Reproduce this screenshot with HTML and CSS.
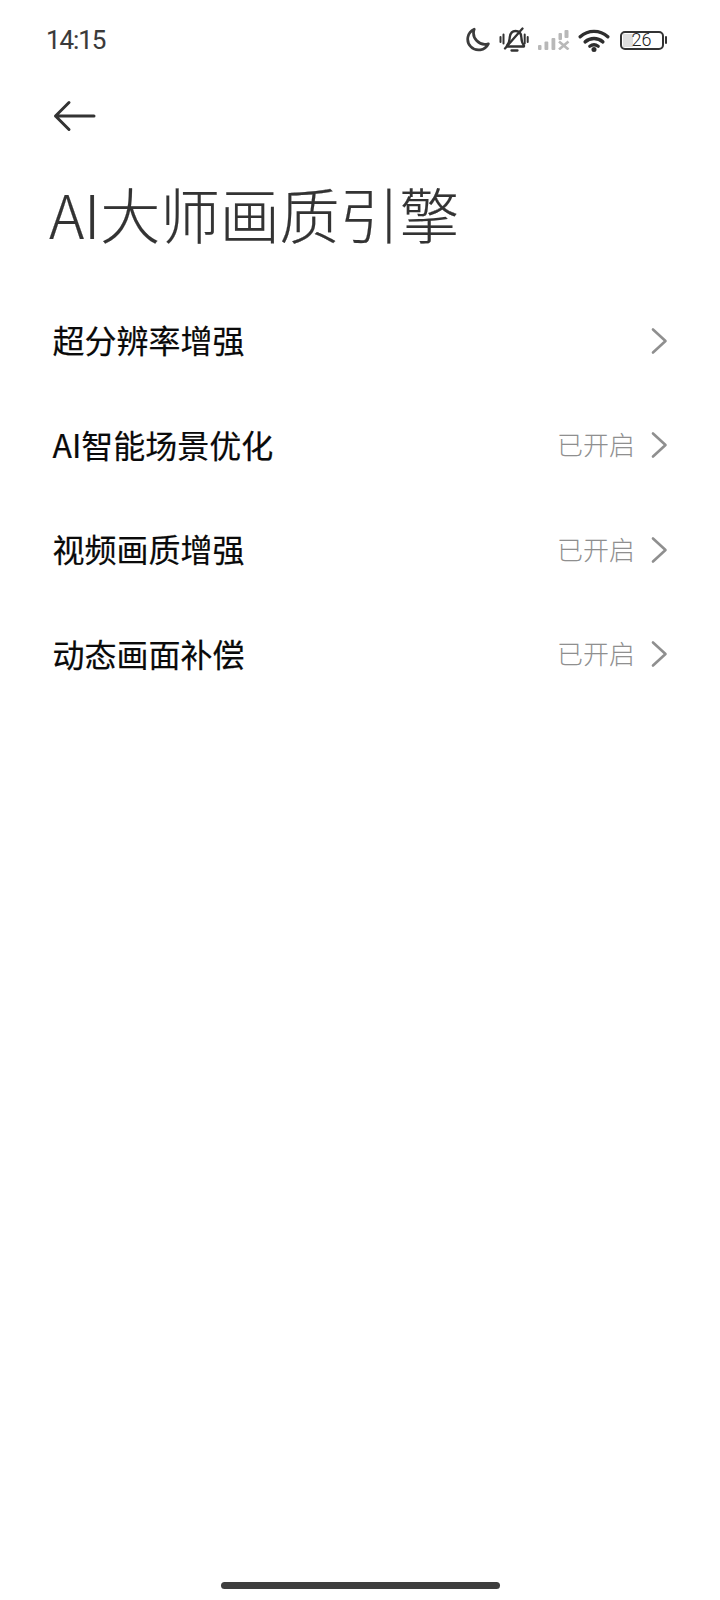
FILE: index.html
```html
<!DOCTYPE html>
<html lang="zh-CN">
<head>
<meta charset="utf-8">
<title>AI大师画质引擎</title>
<link rel="stylesheet" href="styles.css">
</head>
<body>
<div class="screen">
  <header class="status">
    <span class="time">14:15</span>
    <div class="status-icons">
      <svg class="ic-moon" width="25" height="26" viewBox="0 0 23 24" fill="none" stroke="#3c3c3c" stroke-width="2.500" stroke-linecap="round" stroke-linejoin="round"><path d="M8.500 2A10 10 0 1 0 21.500 15.500 10.500 10.500 0 0 1 8.500 2Z"/></svg>
      <svg class="ic-bell" width="30" height="26" viewBox="0 0 30 26" fill="none" stroke="#333" stroke-width="2.300" stroke-linecap="round" stroke-linejoin="round"><path d="M8 18.500c2.500-2 2.300-5 2.800-8.500C11.400 6 14 4 16.500 4c3.500 0 5.600 2.500 5.800 6 .1 3 .5 6 2.700 8.500v1H8.500"/><path d="M12.500 23.500h6"/><path d="M6 21.500 23.500 1.500"/><path d="M1.500 10v5M4.500 7.500v9M25.700 7.500v9M28.700 10v5" stroke-width="2"/></svg>
      <svg class="ic-signal" width="32" height="20" viewBox="0 0 32 20" fill="#b8b8b8"><rect x="0" y="15" width="3.500" height="5" rx="1"/><rect x="6.500" y="11.500" width="3.800" height="8.500" rx="1"/><rect x="13.500" y="8" width="3.800" height="12" rx="1"/><rect x="20.500" y="3" width="3.500" height="7" rx="1"/><rect x="26.500" y="0" width="4" height="8" rx="1"/><path d="M21 11.500l9.500 8M30.500 11.500l-9.500 8" stroke="#b8b8b8" stroke-width="2.600" fill="none"/></svg>
      <svg class="ic-wifi" width="32" height="23" viewBox="0 0 30 22" fill="none" stroke="#2e2e2e" stroke-width="3.200" stroke-linecap="round"><path d="M1.800 7.500C9.500 .5 20.500 .5 28.200 7.500"/><path d="M6.500 12.300c5-4.300 12-4.300 17 0"/><path d="M11 16.500c2.500-1.800 5.500-1.800 8 0"/><circle cx="15" cy="19.500" r="2.400" fill="#2e2e2e" stroke="none"/></svg>
      <div class="battery">
        <div class="batt-body"><span class="batt-fill"></span><span class="batt-num">26</span></div>
        <span class="batt-cap"></span>
      </div>
    </div>
  </header>

  <div class="nav">
    <svg width="44" height="32" viewBox="0 0 44 32" fill="none" stroke="#333" stroke-width="3" stroke-linecap="round" stroke-linejoin="round"><path d="M2.500 16H41M16 2.500 2.500 16 16 29.500"/></svg>
  </div>

  <h1 class="title">AI大师画质引擎</h1>

  <ul class="list">
    <li class="row"><span class="label">超分辨率增强</span><span class="right"><svg class="chev" width="18" height="28" viewBox="0 0 18 28" fill="none" stroke="#8f8f8f" stroke-width="2.600" stroke-linecap="round" stroke-linejoin="round"><path d="M3 2.500 15.500 14 3 25.500"/></svg></span></li>
    <li class="row"><span class="label">AI智能场景优化</span><span class="right"><span class="state">已开启</span><svg class="chev" width="18" height="28" viewBox="0 0 18 28" fill="none" stroke="#8f8f8f" stroke-width="2.600" stroke-linecap="round" stroke-linejoin="round"><path d="M3 2.500 15.500 14 3 25.500"/></svg></span></li>
    <li class="row"><span class="label">视频画质增强</span><span class="right"><span class="state">已开启</span><svg class="chev" width="18" height="28" viewBox="0 0 18 28" fill="none" stroke="#8f8f8f" stroke-width="2.600" stroke-linecap="round" stroke-linejoin="round"><path d="M3 2.500 15.500 14 3 25.500"/></svg></span></li>
    <li class="row"><span class="label">动态画面补偿</span><span class="right"><span class="state">已开启</span><svg class="chev" width="18" height="28" viewBox="0 0 18 28" fill="none" stroke="#8f8f8f" stroke-width="2.600" stroke-linecap="round" stroke-linejoin="round"><path d="M3 2.500 15.500 14 3 25.500"/></svg></span></li>
  </ul>

  <div class="spacer"></div>
  <div class="home-wrap"><span class="home"></span></div>
</div>
</body>
</html>
```

FILE: styles.css
```css
* { box-sizing: border-box; }
html, body { margin: 0; padding: 0; background: #fff; }
body { font-family: "Noto Sans CJK SC", "Noto Sans", sans-serif; color: #000; }
.screen { width: 720px; height: 1600px; display: flex; flex-direction: column; overflow: hidden; }

.status { height: 80px; display: flex; align-items: center; justify-content: space-between; padding: 0 53px 0 46px; }
.time { font-family: Roboto, sans-serif; font-size: 26px; color: #3a3a3a; letter-spacing: -1.100px; -webkit-text-stroke: 0.1px #3a3a3a; }
.status-icons { display: flex; align-items: center; }
.ic-bell { margin-left: 9px; }
.ic-signal { margin-left: 9px; }
.ic-wifi { margin-left: 8px; }
.battery { display: flex; align-items: center; margin-left: 10px; }
.batt-body { position: relative; width: 44px; height: 19px; border: 2px solid #333; border-radius: 5px; display: flex; align-items: center; justify-content: center; }
.batt-fill { position: absolute; left: 1px; top: 1px; bottom: 1px; width: 10px; background: #dedede; }
.batt-num { position: relative; font-family: Roboto, sans-serif; font-size: 18px; font-weight: 300; line-height: 1; color: #222; }
.batt-cap { width: 2.500px; height: 8px; margin-left: 1px; background: #333; border-radius: 1px; }

.nav { height: 72px; padding: 0 0 0 53px; display: flex; align-items: center; }
.title { margin: 0; padding: 14px 0 0 49px; height: 108px; font-size: 60px; font-weight: 300; line-height: 94px; letter-spacing: -0.200px; color: #333; white-space: nowrap; -webkit-text-stroke: 0.2px #333; }

.list { list-style: none; margin: 0; padding: 28.500px 0 0; }
.row { height: 104.500px; display: flex; align-items: center; justify-content: space-between; padding: 0 52px 0 52.500px; }
.label { padding-bottom: 3px; font-size: 32px; line-height: 44px; color: #0a0a0a; -webkit-text-stroke: 0.2px #0a0a0a; }
.right { display: flex; align-items: center; gap: 15px; }
.state { padding-bottom: 3px; font-size: 26px; color: #8f8f8f; font-weight: 300; }
.spacer { flex: 1; }
.home-wrap { height: 18px; display: flex; justify-content: center; }
.home { width: 279px; height: 7px; border-radius: 4px; background: #3e3e3e; }
```
